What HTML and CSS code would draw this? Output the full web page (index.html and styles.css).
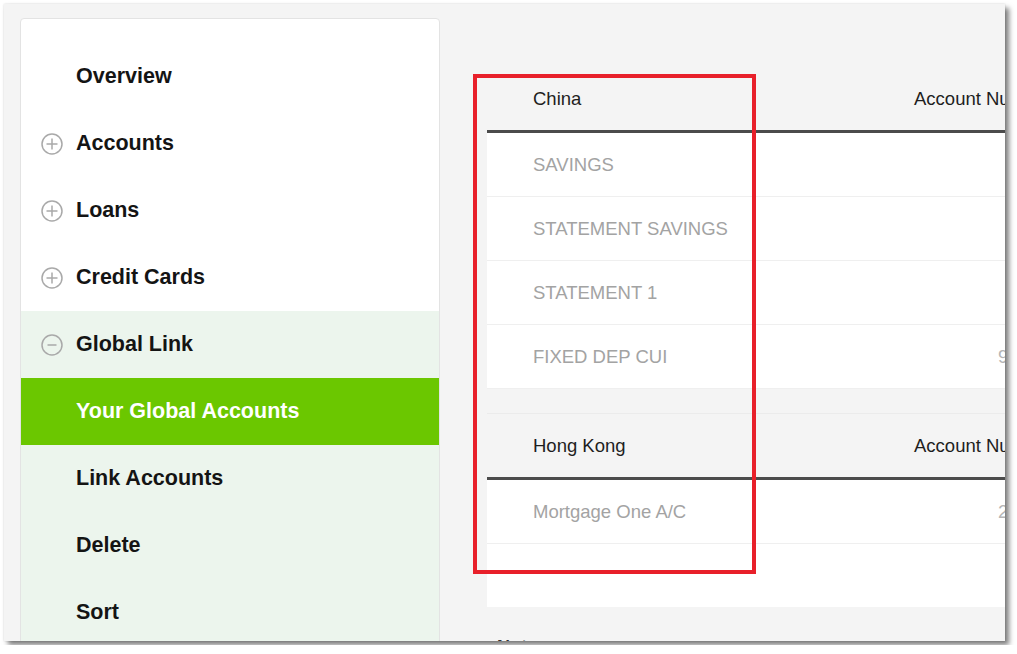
FILE: index.html
```html
<!DOCTYPE html>
<html lang="en">

<head>
    <meta charset="UTF-8">
    <meta name="viewport" content="width=device-width, initial-scale=1.0">
    <title>Your Global Accounts</title>
    <link rel="stylesheet" href="styles.css">
</head>

<body>
    <div class="frame">
        <nav class="sidebar">
            <div class="nav-item">Overview</div>
            <div class="nav-item has-icon">
                <svg class="toggle" width="22" height="22" viewBox="0 0 22 22"><circle cx="11" cy="11" r="10" /><path d="M5.5 11h11M11 5.5v11" /></svg>
                Accounts
            </div>
            <div class="nav-item has-icon">
                <svg class="toggle" width="22" height="22" viewBox="0 0 22 22"><circle cx="11" cy="11" r="10" /><path d="M5.5 11h11M11 5.5v11" /></svg>
                Loans
            </div>
            <div class="nav-item has-icon">
                <svg class="toggle" width="22" height="22" viewBox="0 0 22 22"><circle cx="11" cy="11" r="10" /><path d="M5.5 11h11M11 5.5v11" /></svg>
                Credit Cards
            </div>
            <div class="nav-group">
                <div class="nav-item has-icon">
                    <svg class="toggle" width="22" height="22" viewBox="0 0 22 22"><circle cx="11" cy="11" r="10" /><path d="M6.5 11h9" /></svg>
                    Global Link
                </div>
                <div class="nav-item active">Your Global Accounts</div>
                <div class="nav-item">Link Accounts</div>
                <div class="nav-item">Delete</div>
                <div class="nav-item">Sort</div>
            </div>
        </nav>

        <main class="content">
            <section class="country">
                <div class="country-head">
                    <span class="col-name">China</span>
                    <span class="col-acc">Account Number</span>
                </div>
                <div class="acc-row">
                    <span class="col-name">SAVINGS</span>
                    <span class="col-acc num"></span>
                </div>
                <div class="acc-row">
                    <span class="col-name">STATEMENT SAVINGS</span>
                    <span class="col-acc num"></span>
                </div>
                <div class="acc-row">
                    <span class="col-name">STATEMENT 1</span>
                    <span class="col-acc num"></span>
                </div>
                <div class="acc-row">
                    <span class="col-name">FIXED DEP CUI</span>
                    <span class="col-acc num">9</span>
                </div>
            </section>

            <section class="country second">
                <div class="country-head">
                    <span class="col-name">Hong Kong</span>
                    <span class="col-acc">Account Number</span>
                </div>
                <div class="acc-row">
                    <span class="col-name">Mortgage One A/C</span>
                    <span class="col-acc num">2</span>
                </div>
                <div class="acc-foot"></div>
            </section>

            <h3 class="notes">Notes</h3>
        </main>

        <div class="highlight"></div>
    </div>
</body>

</html>
```

FILE: styles.css
```css
body {
    margin: 0;
    padding: 4px;
    background-color: #fff;
    font-family: "Liberation Sans", Arial, sans-serif;
}

.frame {
    position: relative;
    display: flex;
    align-items: flex-start;
    width: 1001px;
    height: 637px;
    overflow: hidden;
    background-color: #f4f4f4;
    box-shadow: 4px 4px 5px rgba(0, 0, 0, 0.5), 0 0 2px rgba(0, 0, 0, 0.15);
}

/* left menu */
.sidebar {
    flex: none;
    width: 418px;
    margin: 14px 0 0 16px;
    padding-top: 24px;
    background-color: #fff;
    border: 1px solid #e3e3e3;
    border-radius: 4px;
}

.nav-item {
    display: flex;
    align-items: center;
    height: 67px;
    padding-left: 55px;
    font-size: 21.5px;
    font-weight: bold;
    color: #141414;
}

.nav-item.has-icon {
    padding-left: 20px;
    gap: 13px;
}

.toggle {
    flex: none;
    fill: none;
    stroke: #a9a9a9;
    stroke-width: 1.5;
}

.nav-group {
    background-color: #ecf5ed;
}

.nav-item.active {
    background-color: #6bc700;
    color: #fff;
}

/* accounts */
.content {
    flex: none;
    width: 600px;
    margin-left: 47px;
    padding-top: 63px;
}

.country {
    font-size: 18.5px;
}

.country.second {
    margin-top: 24px;
    border-top: 1px solid #ebebeb;
}

.country-head {
    display: flex;
    align-items: center;
    height: 63px;
    color: #1e1e1e;
    border-bottom: 3px solid #4b4b4b;
}

.country.second .country-head {
    height: 63px;
}

.acc-row {
    display: flex;
    align-items: center;
    height: 63px;
    background-color: #fff;
    border-bottom: 1px solid #efefef;
    color: #a3a3a3;
}

.col-name {
    flex: none;
    width: 381px;
    padding-left: 46px;
    white-space: nowrap;
}

.col-acc {
    flex: none;
    white-space: nowrap;
}

.num {
    padding-left: 84px;
    color: #b5b5b5;
}

.acc-foot {
    height: 63px;
    background-color: #fff;
}

.notes {
    margin: 30px 0 0 10px;
    font-size: 18px;
    color: #333;
}

/* annotation */
.highlight {
    position: absolute;
    left: 469px;
    top: 70px;
    width: 283px;
    height: 500px;
    border: 4px solid #e8202a;
    box-sizing: border-box;
}
```
